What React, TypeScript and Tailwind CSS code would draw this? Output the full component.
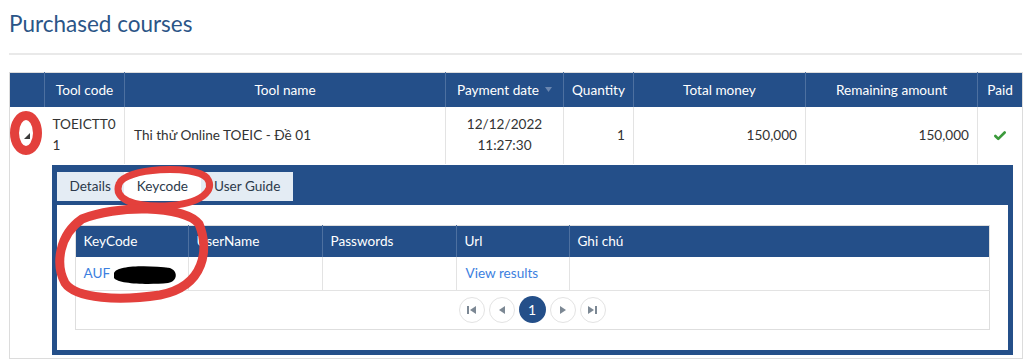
import { Check } from 'lucide-react'

const BLUE = 'bg-[#244f89]'

const COURSE_COLS = [35, 80, 321, 118, 70, 172, 172, 45]
const KEY_COLS = [113, 134, 134, 113, 420]

function PagerButton({ children, active }: { children: React.ReactNode; active?: boolean }) {
  if (active) {
    return (
      <span className="flex h-[27px] w-[27px] items-center justify-center rounded-full bg-[#244f89] text-[14px] text-white">
        {children}
      </span>
    )
  }
  return (
    <span className="flex h-[26px] w-[26px] items-center justify-center rounded-full border border-[#e3e3e3] text-[#7c8894]">
      {children}
    </span>
  )
}

function Tri({ dir }: { dir: 'left' | 'right' }) {
  return (
    <svg width="6" height="8" viewBox="0 0 6 8" aria-hidden="true">
      {dir === 'left' ? <path d="M6 0v8L0 4z" fill="currentColor" /> : <path d="M0 0v8l6-4z" fill="currentColor" />}
    </svg>
  )
}

function KeycodePanel() {
  return (
    <div className="bg-[#244f89] p-[5px] pt-0">
      <div className="flex pt-[7px] pb-[4px] text-[13.6px] leading-[21px] text-[#2c3a4b]">
        <span className="bg-[#e4ecf4] px-[13px] py-[4px]">Details</span>
        <span className="bg-white px-[13px] py-[4px]">Keycode</span>
        <span className="bg-[#e4ecf4] px-[13px] py-[4px]">User Guide</span>
      </div>
      <div className="bg-white px-[18px] py-[20px]">
        <table className="w-[914px] table-fixed border-collapse border border-[#dedede] text-[13.6px]">
          <colgroup>
            {KEY_COLS.map((w, i) => (
              <col key={i} style={{ width: w }} />
            ))}
          </colgroup>
          <thead>
            <tr className={`${BLUE} h-[32px] text-left text-white`}>
              {['KeyCode', 'UserName', 'Passwords', 'Url', 'Ghi chú'].map((h) => (
                <th key={h} className="border-l border-[#4d70a0] px-[8px] font-normal first:border-l-0">
                  {h}
                </th>
              ))}
            </tr>
          </thead>
          <tbody>
            <tr className="h-[33px] border-b border-[#e3e3e3]">
              <td className="px-[8px] text-[#3d7fe0]">AUF</td>
              <td className="border-l border-[#e3e3e3]" />
              <td className="border-l border-[#e3e3e3]" />
              <td className="border-l border-[#e3e3e3] px-[9px] text-[#3d7fe0]">View results</td>
              <td className="border-l border-[#e3e3e3]" />
            </tr>
            <tr className="h-[39px]">
              <td colSpan={5}>
                <div className="flex items-center justify-center gap-[4px]">
                  <PagerButton>
                    <span className="flex items-center">
                      <span className="mr-[1px] h-[8px] w-[2px] bg-current" />
                      <Tri dir="left" />
                    </span>
                  </PagerButton>
                  <PagerButton>
                    <Tri dir="left" />
                  </PagerButton>
                  <PagerButton active>1</PagerButton>
                  <PagerButton>
                    <Tri dir="right" />
                  </PagerButton>
                  <PagerButton>
                    <span className="flex items-center">
                      <Tri dir="right" />
                      <span className="ml-[1px] h-[8px] w-[2px] bg-current" />
                    </span>
                  </PagerButton>
                </div>
              </td>
            </tr>
          </tbody>
        </table>
      </div>
    </div>
  )
}

function Annotations() {
  return (
    <svg className="pointer-events-none absolute inset-0" width="1024" height="360" viewBox="0 0 1024 360">
      <g fill="none" stroke="#e3403c" strokeLinecap="round" strokeLinejoin="round">
        <ellipse cx="26" cy="133" rx="11.5" ry="17.5" strokeWidth="9" />
        <path d="M119 184 C 124 168, 194 164, 207 178 C 216 190, 202 204, 165 206 C 133 207, 113 199, 119 184 Z M164 206 L 166 211" strokeWidth="7" />
        <path d="M82 219 C 115 205, 184 205, 199 224 C 209 248, 206 286, 160 295 C 120 301, 76 299, 65 283 C 55 264, 59 235, 82 219 Z" strokeWidth="9" />
      </g>
      <path d="M114 273 C 116 265, 150 265, 170 268 C 178 271, 178 281, 168 283 C 148 285, 118 284, 114 278 Z" fill="#000" />
    </svg>
  )
}

export default function App() {
  return (
    <div className="relative h-[360px] w-[1024px] overflow-hidden bg-white font-['Lato',sans-serif] text-[#333]">
      <div className="pl-[9px]">
        <h1 className="pt-[9px] text-[22.5px] leading-[30px] text-[#2b5587]">Purchased courses</h1>
        <div className="mt-[14px] mr-[2px] h-[2px] bg-[#e9e9e9]" />

        <table className="mt-[17px] w-[1013px] table-fixed border-collapse border border-[#dcdcdc] text-[13.6px]">
          <colgroup>
            {COURSE_COLS.map((w, i) => (
              <col key={i} style={{ width: w }} />
            ))}
          </colgroup>
          <thead>
            <tr className={`${BLUE} h-[34px] text-white`}>
              <th className="font-normal" />
              <th className="border-l border-[#4d70a0] font-normal">Tool code</th>
              <th className="border-l border-[#4d70a0] font-normal">Tool name</th>
              <th className="border-l border-[#4d70a0] font-normal">
                <span className="inline-flex items-center gap-[6px]">
                  Payment date
                  <svg width="7" height="5" viewBox="0 0 7 5" aria-hidden="true">
                    <path d="M0 0h7L3.5 5z" fill="#6a86b0" />
                  </svg>
                </span>
              </th>
              <th className="border-l border-[#4d70a0] font-normal">Quantity</th>
              <th className="border-l border-[#4d70a0] font-normal">Total money</th>
              <th className="border-l border-[#4d70a0] font-normal">Remaining amount</th>
              <th className="border-l border-[#4d70a0] font-normal">Paid</th>
            </tr>
          </thead>
          <tbody>
            <tr className="h-[57px] leading-[21px]">
              <td className="text-center">
                <svg className="inline-block" width="6" height="6" viewBox="0 0 6 6" aria-hidden="true">
                  <path d="M6 0v6H0z" fill="#3a3a3a" />
                </svg>
              </td>
              <td className="py-[7px] pr-[3px] pl-[8px] break-all">TOEICTT01</td>
              <td className="border-l border-[#e3e3e3] px-[9px]">Thi thử Online TOEIC - Đề 01</td>
              <td className="border-l border-[#e3e3e3] px-[8px] text-center">
                12/12/2022
                <br />
                11:27:30
              </td>
              <td className="border-l border-[#e3e3e3] px-[8px] text-right">1</td>
              <td className="border-l border-[#e3e3e3] px-[8px] text-right">150,000</td>
              <td className="border-l border-[#e3e3e3] px-[8px] text-right">150,000</td>
              <td className="border-l border-[#e3e3e3] text-center">
                <Check className="inline-block h-[14px] w-[14px] text-[#3b9a3b]" strokeWidth={4.5} />
              </td>
            </tr>
            <tr>
              <td />
              <td colSpan={7} className="pt-[1px] pr-[9px] pb-[3px] pl-[7px]">
                <KeycodePanel />
              </td>
            </tr>
          </tbody>
        </table>
      </div>
      <Annotations />
    </div>
  )
}
